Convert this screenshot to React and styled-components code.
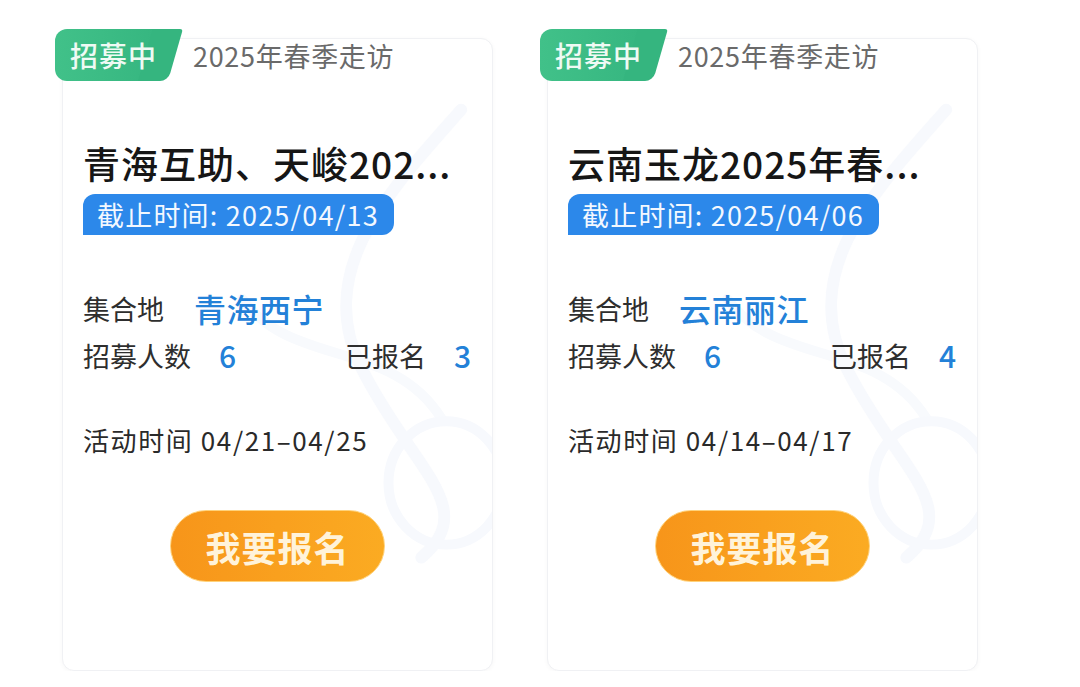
import React from 'react';
import styled, { createGlobalStyle } from 'styled-components';

const GlobalStyle = createGlobalStyle`
  body {
    margin: 0;
    background: #ffffff;
    font-family: "Noto Sans CJK SC", "Noto Sans", sans-serif;
  }
`;

const Page = styled.main`
  display: flex;
  gap: 54px;
  padding: 38px 0 0 62px;
`;

const Card = styled.section`
  position: relative;
  box-sizing: border-box;
  width: 431px;
  padding: 0 20px 88px;
  background: #fff;
  border: 1px solid #f0f1f4;
  border-radius: 12px;
  box-shadow: 0 1px 5px rgba(0, 0, 0, 0.035);
`;

const Watermark = styled.svg`
  position: absolute;
  left: 0;
  top: 0;
  width: 100%;
  height: 100%;
  pointer-events: none;
`;

const Content = styled.div`
  position: relative;
`;

const CardHeader = styled.div`
  display: flex;
  align-items: center;
  height: 52px;
  margin: -10px 0 0 -28px;
`;

const Tag = styled.span`
  position: relative;
  isolation: isolate;
  box-sizing: border-box;
  width: 113px;
  height: 52px;
  padding-left: 15px;
  line-height: 52px;
  font-size: 28px;
  font-weight: 500;
  letter-spacing: 1px;
  color: #effaf4;

  &::before {
    content: '';
    position: absolute;
    inset: 0 12px 0 0;
    background: linear-gradient(90deg, #41c189, #36b680);
    border-radius: 12px 0 0 12px;
    z-index: -1;
  }

  &::after {
    content: '';
    position: absolute;
    top: 0;
    bottom: 0;
    right: 0;
    width: 30px;
    background: #35b57f;
    border-radius: 0 3px 8px 0;
    transform: skewX(-16deg);
    transform-origin: bottom right;
    z-index: -1;
  }
`;

const Season = styled.span`
  margin-left: 25px;
  font-size: 27px;
  letter-spacing: 0.7px;
  color: #6a6a6a;
`;

const Title = styled.h2`
  margin: 60px 0 0;
  font-size: 37px;
  line-height: 44px;
  font-weight: 500;
  letter-spacing: 1px;
  color: #161616;
  white-space: nowrap;
`;

const Deadline = styled.div`
  display: inline-block;
  margin-top: 9px;
  height: 41px;
  padding: 0 15px 0 14px;
  line-height: 41px;
  font-size: 27px;
  letter-spacing: 1.2px;
  color: #f3f8ff;
  background: #2c88ea;
  border-radius: 12px 12px 12px 0;
  white-space: nowrap;
`;

const Row = styled.div`
  display: flex;
  align-items: center;
  height: 40px;
  margin-top: ${p => p.gap}px;
`;

const Field = styled.div`
  display: flex;
  align-items: center;
  flex-shrink: 0;
  gap: ${p => p.gap || 28}px;
  width: ${p => (p.width ? `${p.width}px` : 'auto')};
  white-space: nowrap;
`;

const Label = styled.span`
  font-size: 27px;
  color: #2e2e2e;
`;

const Value = styled.span`
  font-size: ${p => p.size || 32}px;
  font-weight: 500;
  letter-spacing: 0.5px;
  color: #2381d8;
`;

const Period = styled.div`
  margin-top: 47px;
  height: 36px;
  line-height: 36px;
  font-size: 26px;
  letter-spacing: 1.6px;
  color: #2a2a2a;
`;

const ButtonRow = styled.div`
  display: flex;
  justify-content: center;
  margin-top: 52px;
`;

const SignUp = styled.button`
  width: 215px;
  height: 72px;
  border: 1px solid #ffd27a;
  border-radius: 36px;
  background: linear-gradient(90deg, #f7951a, #fbab22);
  color: #fff3da;
  font-family: inherit;
  font-size: 35px;
  font-weight: 700;
  letter-spacing: 1px;
  cursor: pointer;
`;

const activities = [
  {
    title: '青海互助、天峻202...',
    deadline: '2025/04/13',
    place: '青海西宁',
    quota: 6,
    joined: 3,
    period: '04/21–04/25',
  },
  {
    title: '云南玉龙2025年春...',
    deadline: '2025/04/06',
    place: '云南丽江',
    quota: 6,
    joined: 4,
    period: '04/14–04/17',
  },
];

const ActivityCard = ({ item }) => (
  <Card>
    <Watermark viewBox="0 0 431 632" fill="none">
      <path d="M400 70 C 330 150, 250 230, 300 330 S 420 470, 360 520" stroke="#f7f9fd" strokeWidth="12" strokeLinecap="round" />
      <path d="M180 260 C 230 330, 330 300, 380 380" stroke="#f8fafd" strokeWidth="10" strokeLinecap="round" />
      <ellipse cx="385" cy="445" rx="58" ry="62" stroke="#f7f9fd" strokeWidth="10" />
    </Watermark>
    <Content>
      <CardHeader>
        <Tag>招募中</Tag>
        <Season>2025年春季走访</Season>
      </CardHeader>
      <Title>{item.title}</Title>
      <Deadline>截止时间: {item.deadline}</Deadline>
      <Row gap={53}>
        <Field gap={30}>
          <Label>集合地</Label>
          <Value>{item.place}</Value>
        </Field>
      </Row>
      <Row gap={7}>
        <Field width={262}>
          <Label>招募人数</Label>
          <Value size={30}>{item.quota}</Value>
        </Field>
        <Field>
          <Label>已报名</Label>
          <Value size={30}>{item.joined}</Value>
        </Field>
      </Row>
      <Period>活动时间 {item.period}</Period>
      <ButtonRow>
        <SignUp>我要报名</SignUp>
      </ButtonRow>
    </Content>
  </Card>
);

export default function App() {
  return (
    <>
      <GlobalStyle />
      <Page>
        {activities.map(item => (
          <ActivityCard key={item.deadline} item={item} />
        ))}
      </Page>
    </>
  );
}
